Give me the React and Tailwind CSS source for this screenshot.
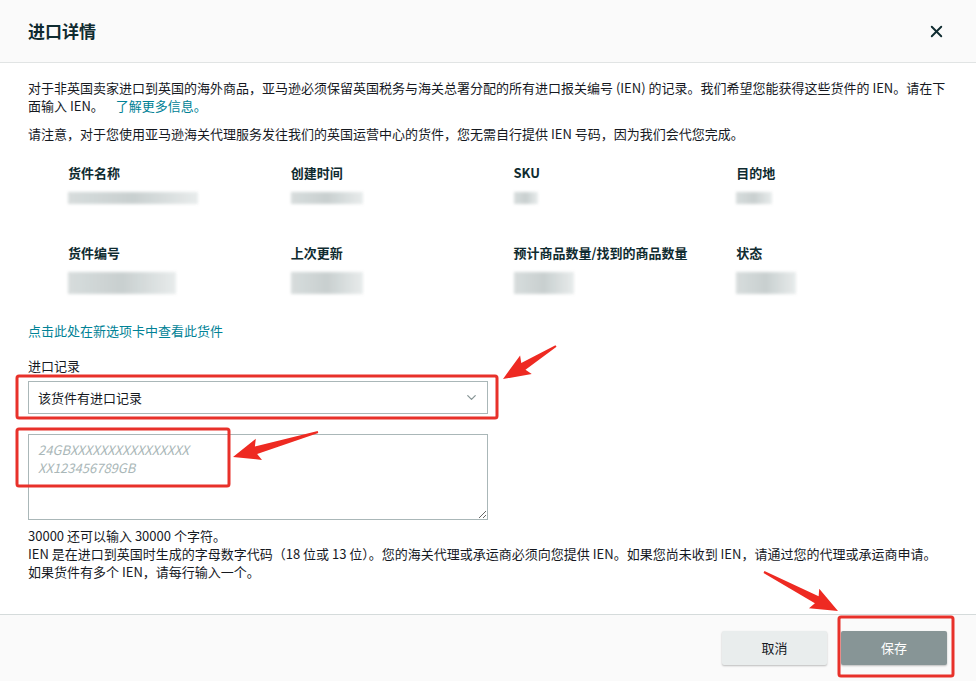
import { X, ChevronDown } from "lucide-react";

// red annotation arrow: thin tail widening into a pointed head
function arrowPoints(x1, y1, x2, y2) {
  const dx = x2 - x1;
  const dy = y2 - y1;
  const len = Math.sqrt(dx * dx + dy * dy);
  const ux = dx / len;
  const uy = dy / len;
  const nx = -uy;
  const ny = ux;
  const headLen = 24;
  const headW = 11;
  const neckW = 4;
  const bx = x2 - ux * headLen;
  const by = y2 - uy * headLen;
  const pts = [
    [x1 + nx * 1, y1 + ny * 1],
    [bx + nx * neckW, by + ny * neckW],
    [bx + nx * headW - ux * 3, by + ny * headW - uy * 3],
    [x2, y2],
    [bx - nx * headW - ux * 3, by - ny * headW - uy * 3],
    [bx - nx * neckW, by - ny * neckW],
    [x1 - nx * 1, y1 - ny * 1],
  ];
  return pts.map((p) => p.join(",")).join(" ");
}

const details = [
  { label: "货件名称", blur: [130, 12] },
  { label: "创建时间", blur: [72, 12] },
  { label: "SKU", blur: [24, 12] },
  { label: "目的地", blur: [36, 12] },
  { label: "货件编号", blur: [108, 22] },
  { label: "上次更新", blur: [72, 22] },
  { label: "预计商品数量/找到的商品数量", blur: [60, 22] },
  { label: "状态", blur: [60, 22] },
];

function Blur({ w, h }) {
  return (
    <div
      className="mt-[10px] bg-gradient-to-r from-[#d3d9d9] via-[#c3cbcb] to-[#e6eaea] blur-[1.5px] opacity-90"
      style={{ width: w, height: h }}
    />
  );
}

export default function App() {
  return (
    <div
      className="relative flex h-[681px] w-full flex-col bg-white text-[#16191f]"
      style={{ fontFamily: '"Noto Sans CJK SC", "Noto Sans", sans-serif' }}
    >
      <div className="flex h-[63px] shrink-0 items-center justify-between border-b border-[#e1e4e4] bg-[#fafafa] pl-7 pr-[30px]">
        <h1 className="text-[17px] font-bold text-[#0f2b30]">进口详情</h1>
        <X className="h-[19px] w-[19px] text-[#0f2b30]" strokeWidth={2.4} />
      </div>

      <div className="flex-1 pl-7 pr-[30px] pt-[16px] text-[13px] leading-[18px]">
        <p>
          对于非英国卖家进口到英国的海外商品，亚马逊必须保留英国税务与海关总署分配的所有进口报关编号 (IEN) 的记录。我们希望您能获得这些货件的 IEN。请在下面输入 IEN。
          <span className="ml-3 text-[#008296]">了解更多信息。</span>
        </p>
        <p className="mt-[10px]">
          请注意，对于您使用亚马逊海关代理服务发往我们的英国运营中心的货件，您无需自行提供 IEN 号码，因为我们会代您完成。
        </p>

        <div className="mt-[21px] grid w-[931px] grid-cols-4 gap-y-[40px] pl-10">
          {details.map((d) => (
            <div key={d.label}>
              <div className="text-[13px] font-bold text-[#0f2b30]">{d.label}</div>
              <Blur w={d.blur[0]} h={d.blur[1]} />
            </div>
          ))}
        </div>

        <div className="mt-[28px] text-[#008296]">点击此处在新选项卡中查看此货件</div>

        <div className="mt-[17px]">进口记录</div>
        <div className="mt-[6px] flex h-[33px] w-[460px] items-center justify-between border border-[#aab7b8] pl-[9px] pr-[8px] text-[13px]">
          <span>该货件有进口记录</span>
          <ChevronDown className="h-[15px] w-[15px] text-[#879596]" strokeWidth={2} />
        </div>
        <textarea
          className="mt-[20px] block h-[86px] w-[460px] border border-[#aab7b8] px-[9px] py-[6px] text-[13px] leading-[18px] outline-none placeholder:italic placeholder:text-[#aab7b8]"
          placeholder={"24GBXXXXXXXXXXXXXXXX\nXX123456789GB"}
        />
        <div className="mt-[7px] text-[13px] leading-[18px]">
          <div>30000 还可以输入 30000 个字符。</div>
          <div>
            IEN 是在进口到英国时生成的字母数字代码（18 位或 13 位）。您的海关代理或承运商必须向您提供 IEN。如果您尚未收到 IEN，请通过您的代理或承运商申请。
          </div>
          <div>如果货件有多个 IEN，请每行输入一个。</div>
        </div>
      </div>

      <div className="flex h-[67px] shrink-0 items-center justify-end gap-[14px] border-t border-[#d5dbdb] bg-[#fafafa] pr-[29px]">
        <button className="h-[34px] w-[105px] rounded-[2px] bg-[#e9eded] text-[13px] text-[#16191f] shadow-[0_1px_2px_rgba(0,0,0,0.25)]">
          取消
        </button>
        <button className="h-[34px] w-[106px] rounded-[2px] bg-[#879596] text-[13px] text-white shadow-[0_1px_2px_rgba(0,0,0,0.25)]">
          保存
        </button>
      </div>

      {/* annotations drawn over the screenshot */}
      <svg className="pointer-events-none absolute left-0 top-0" width="976" height="681">
        <rect x="17" y="376" width="480" height="42" rx="2" fill="none" stroke="#e8312a" strokeWidth="3" />
        <rect x="17" y="429" width="212" height="57" rx="2" fill="none" stroke="#e8312a" strokeWidth="3" />
        <rect x="839" y="617" width="114" height="59" rx="2" fill="none" stroke="#e8312a" strokeWidth="3" />
        <polygon points={arrowPoints(556, 346, 503, 379)} fill="#ee2a22" />
        <polygon points={arrowPoints(318, 432, 233, 457)} fill="#ee2a22" />
        <polygon points={arrowPoints(764, 572, 838, 611)} fill="#ee2a22" />
      </svg>
    </div>
  );
}
